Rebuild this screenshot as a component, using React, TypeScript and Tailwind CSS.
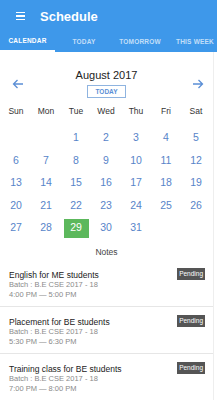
import React from "react";

const days = ["Sun", "Mon", "Tue", "Wed", "Thu", "Fri", "Sat"];
const cells: (number | null)[] = [null, null, ...Array.from({ length: 31 }, (_, i) => i + 1)];
while (cells.length < 35) cells.push(null);

const notes = [
  { title: "English for ME students", time: "4:00 PM — 5:00 PM" },
  { title: "Placement for BE students", time: "5:30 PM — 6:30 PM" },
  { title: "Training class for BE students", time: "7:00 PM — 8:00 PM" },
];

export default function App() {
  return (
    <div className="w-[217px] h-[400px] overflow-hidden bg-white" style={{ fontFamily: '"Liberation Sans", Arial, sans-serif' }}>
      <div className="bg-[#3e98ea] h-[52px] flex flex-col">
        <div className="h-[32px] flex items-center">
          <div className="w-[40px] flex justify-center pl-[1px]">
            <div className="flex flex-col gap-[2px]">
              <div className="w-[9px] h-[1.5px] bg-white" />
              <div className="w-[9px] h-[1.5px] bg-white" />
              <div className="w-[9px] h-[1.5px] bg-white" />
            </div>
          </div>
          <div className="text-white font-bold text-[13px] leading-none">Schedule</div>
        </div>
        <div className="h-[20px] flex whitespace-nowrap text-[6.5px] font-bold tracking-[0.2px]">
          <div className="w-[55px] shrink-0 flex flex-col items-center justify-between">
            <div className="flex-1 flex items-center text-white">CALENDAR</div>
            <div className="w-full h-[2px] bg-white" />
          </div>
          <div className="w-[58px] shrink-0 flex items-center justify-center text-white/70">TODAY</div>
          <div className="w-[54px] shrink-0 flex items-center justify-center text-white/70">TOMORROW</div>
          <div className="w-[56px] shrink-0 flex items-center justify-center text-white/70">THIS WEEK</div>
        </div>
      </div>
      <div className="border-r border-[#eeeeee] mr-[3px]">
        <div className="relative flex flex-col items-center pt-[17.5px]">
          <div className="text-[11px] text-[#222] leading-none">August 2017</div>
          <div className="mt-[4.5px] w-[39px] h-[13px] border border-[#8fb4e0] flex items-center justify-center text-[6.5px] font-bold text-[#5b8fd6]">TODAY</div>
          <svg className="absolute left-[12px] top-[26px]" width="12" height="12" viewBox="0 0 12 12" fill="none" stroke="#5b8fd6" strokeWidth="1.3">
            <path d="M11 6H1.5M5.5 2L1.5 6l4 4" />
          </svg>
          <svg className="absolute left-[192px] top-[26px]" width="12" height="12" viewBox="0 0 12 12" fill="none" stroke="#5b8fd6" strokeWidth="1.3">
            <path d="M1 6h9.5M6.5 2l4 4-4 4" />
          </svg>
        </div>
        <div className="grid grid-cols-7 pl-[1px] w-[211px] mt-[6px]">
          {days.map((d) => (
            <div key={d} className="h-[14px] flex items-center justify-center text-[8.5px] text-[#333]">{d}</div>
          ))}
        </div>
        <div className="grid grid-cols-7 pl-[1px] w-[211px] mt-[9px]">
          {cells.map((c, i) => (
            <div key={i} className="h-[22.5px] flex items-center justify-center">
              {c === 29 ? (
                <div className="w-[25px] h-[19px] bg-[#5cb85c] text-white text-[10.5px] flex items-center justify-center">29</div>
              ) : c ? (
                <span className="text-[10.5px] text-[#5784c9]">{c}</span>
              ) : null}
            </div>
          ))}
        </div>
        <div className="text-center text-[8.5px] text-[#444] mt-[8px] leading-none">Notes</div>
        <div className="mt-[4px]">
          {notes.map((n, i) => (
            <div key={i} className="flex border-b border-[#e6e6e6] pl-[9px] pr-[8px] pt-[10px] h-[47px]">
              <div className="flex-1 flex flex-col leading-[10px]">
                <div className="text-[8.5px] text-[#222]">{n.title}</div>
                <div className="text-[7.5px] text-[#8a8a8a]">Batch : B.E CSE 2017 - 18</div>
                <div className="text-[7.5px] text-[#8a8a8a]">{n.time}</div>
              </div>
              <div className="mt-[-2px] h-[12px] px-[2px] bg-[#555] text-white text-[6.5px] flex items-center">Pending</div>
            </div>
          ))}
        </div>
      </div>
    </div>
  );
}
